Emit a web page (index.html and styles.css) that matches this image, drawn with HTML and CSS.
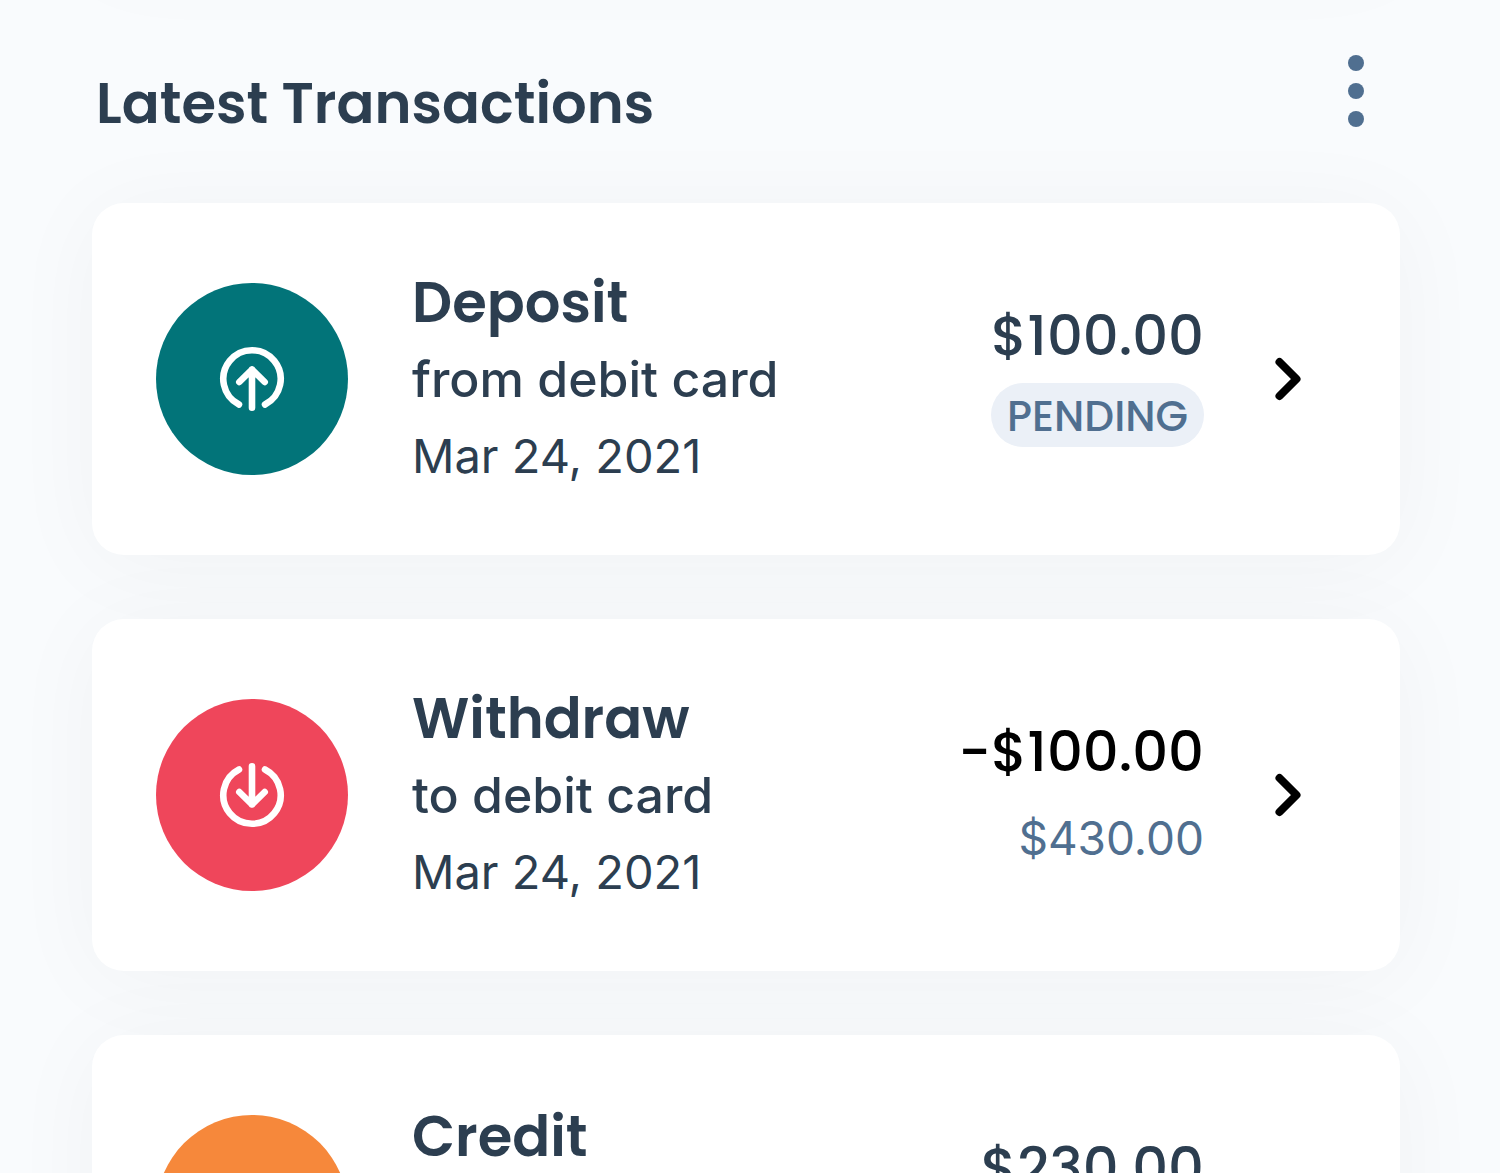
FILE: index.html
```html
<!DOCTYPE html>
<html lang="en">

<head>
    <meta charset="UTF-8">
    <meta name="viewport" content="width=device-width, initial-scale=1.0">
    <title>Latest Transactions</title>
    <link rel="stylesheet" href="styles.css">
</head>

<body>

    <main class="page">
        <div class="balance-card"></div>

        <header class="section-header">
            <h1>Latest Transactions</h1>
            <button class="menu-button" type="button" aria-label="More options">
                <span class="dot"></span>
                <span class="dot"></span>
                <span class="dot"></span>
            </button>
        </header>

        <ul class="transactions">
            <li class="card">
                <span class="badge deposit">
                    <svg class="icon" viewBox="-32 -32 64 64" aria-hidden="true">
                        <path d="M-13 25.5A28.7 28.7 0 1 1 13 25.5M0 28.7V-9.5M-12.7 3L0 -9.5L12.7 3" />
                    </svg>
                </span>
                <div class="details">
                    <h2>Deposit</h2>
                    <p class="source">from debit card</p>
                    <p class="date">Mar 24, 2021</p>
                </div>
                <div class="amounts">
                    <p class="amount">$100.00</p>
                    <p class="status">PENDING</p>
                </div>
                <a class="more" href="#" aria-label="Deposit details">
                    <svg viewBox="0 0 96 96" aria-hidden="true">
                        <path d="M39.5 31L56.5 48L39.5 65" />
                    </svg>
                </a>
            </li>

            <li class="card">
                <span class="badge withdraw">
                    <svg class="icon" viewBox="-32 -32 64 64" aria-hidden="true">
                        <path d="M-13 -25.5A28.7 28.7 0 1 0 13 -25.5M0 -28.7V9.5M-12.7 -3L0 9.5L12.7 -3" />
                    </svg>
                </span>
                <div class="details">
                    <h2>Withdraw</h2>
                    <p class="source">to debit card</p>
                    <p class="date">Mar 24, 2021</p>
                </div>
                <div class="amounts">
                    <p class="amount negative">-$100.00</p>
                    <p class="balance">$430.00</p>
                </div>
                <a class="more" href="#" aria-label="Withdraw details">
                    <svg viewBox="0 0 96 96" aria-hidden="true">
                        <path d="M39.5 31L56.5 48L39.5 65" />
                    </svg>
                </a>
            </li>

            <li class="card">
                <span class="badge credit"></span>
                <div class="details">
                    <h2>Credit</h2>
                </div>
                <div class="amounts">
                    <p class="amount">$230.00</p>
                </div>
            </li>
        </ul>
    </main>

</body>

</html>
```

FILE: styles.css
```css
* {
    box-sizing: border-box;
}

body {
    margin: 0;
    height: 100vh;
    overflow: hidden;
    background-color: #f9fbfd;
    color: #2c3e50;
    font-family: Poppins, Inter, sans-serif;
}

h1, h2, p, ul {
    margin: 0;
    padding: 0;
}

.page {
    padding: 0 100px 0 92px;
}

/* Card above the list, scrolled out of view */
.balance-card {
    height: 352px;
    margin-top: -400px;
    border-radius: 32px;
    background-color: #fff;
    box-shadow: 0 8px 96px rgba(0, 0, 0, 0.04);
}

.section-header {
    display: flex;
    justify-content: space-between;
    align-items: flex-start;
    margin-top: 96px;
    padding: 0 28px 0 4px;
}

h1 {
    padding-top: 16px;
    font-size: 56px;
    font-weight: 600;
    line-height: 80px;
}

.menu-button {
    display: flex;
    flex-direction: column;
    gap: 12px;
    padding: 7px 8px;
    border: none;
    background: none;
    cursor: pointer;
}

.dot {
    width: 16px;
    height: 16px;
    border-radius: 50%;
    background-color: #506f90;
}

.transactions {
    display: flex;
    flex-direction: column;
    gap: 64px;
    margin-top: 59px;
    list-style: none;
}

.card {
    display: grid;
    grid-template-columns: 192px 1fr auto 96px;
    align-items: center;
    min-height: 352px;
    padding: 0 64px;
    border-radius: 32px;
    background-color: #fff;
    box-shadow: 0 8px 96px rgba(0, 0, 0, 0.04);
}

.badge {
    display: flex;
    justify-content: center;
    align-items: center;
    width: 192px;
    height: 192px;
    border-radius: 50%;
}

.deposit {
    background-color: #027479;
}

.withdraw {
    background-color: #ef465b;
}

.credit {
    background-color: #f6883b;
}

.icon {
    width: 64px;
    height: 64px;
    overflow: visible;
}

svg path {
    fill: none;
    stroke: #fff;
    stroke-width: 6.6;
    stroke-linecap: round;
    stroke-linejoin: round;
}

.details {
    min-height: 228px;
    margin-left: 64px;
    padding-top: 2px;
}

h2 {
    font-size: 56px;
    font-weight: 600;
    line-height: 76px;
}

.source, .date, .balance {
    font-family: Inter, sans-serif;
}

.source {
    font-size: 50px;
    font-weight: 500;
    line-height: 76px;
}

.date {
    font-size: 47px;
    line-height: 78px;
}

.amounts {
    display: flex;
    flex-direction: column;
    align-items: flex-end;
    gap: 8px;
    min-height: 164px;
    margin-right: 36px;
}

.amount {
    font-size: 56px;
    font-weight: 500;
    line-height: 78px;
}

.negative {
    color: #000;
}

.status {
    padding: 4px 16px 0;
    border-radius: 32px;
    background-color: #ebf0f7;
    color: #506f90;
    font-size: 42px;
    font-weight: 500;
    line-height: 60px;
}

.balance {
    color: #506f90;
    font-size: 46px;
    line-height: 78px;
}

.more svg {
    display: block;
    width: 96px;
    height: 96px;
}

.more path {
    stroke: #000;
    stroke-width: 8;
}
```
